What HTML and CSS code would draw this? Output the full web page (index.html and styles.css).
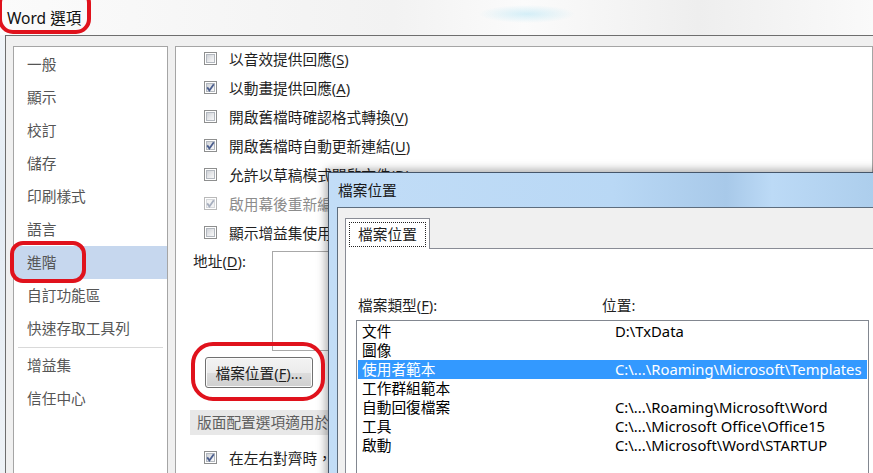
FILE: index.html
```html
<!DOCTYPE html>
<html lang="zh-Hant">
<head>
<meta charset="utf-8">
<title>Word 選項</title>
<link rel="stylesheet" href="styles.css">
</head>
<body>
<div class="screen">
  <header class="titlebar"><span class="title">Word 選項</span></header>
  <div class="client">
    <nav class="sidebar">
      <div class="nav-item">一般</div>
      <div class="nav-item">顯示</div>
      <div class="nav-item">校訂</div>
      <div class="nav-item">儲存</div>
      <div class="nav-item">印刷樣式</div>
      <div class="nav-item">語言</div>
      <div class="nav-item selected">進階</div>
      <div class="nav-item">自訂功能區</div>
      <div class="nav-item">快速存取工具列</div>
      <div class="nav-sep"></div>
      <div class="nav-item">增益集</div>
      <div class="nav-item">信任中心</div>
    </nav>
    <main class="panel">
      <div class="opts">
        <div class="opt"><span class="cb"></span><span>以音效提供回應(<u>S</u>)</span></div>
        <div class="opt"><span class="cb"><svg viewBox="0 0 13 13"><path d="M3.2 6.4 5.4 9.4 9.8 3.2"/></svg></span><span>以動畫提供回應(<u>A</u>)</span></div>
        <div class="opt"><span class="cb"></span><span>開啟舊檔時確認格式轉換(<u>V</u>)</span></div>
        <div class="opt"><span class="cb"><svg viewBox="0 0 13 13"><path d="M3.2 6.4 5.4 9.4 9.8 3.2"/></svg></span><span>開啟舊檔時自動更新連結(<u>U</u>)</span></div>
        <div class="opt"><span class="cb"></span><span>允許以草稿模式開啟文件(<u>D</u>)</span></div>
        <div class="opt disabled"><span class="cb"><svg viewBox="0 0 13 13"><path d="M3.2 6.4 5.4 9.4 9.8 3.2"/></svg></span><span>啟用幕後重新編頁(<u>B</u>)</span></div>
        <div class="opt"><span class="cb"></span><span>顯示增益集使用者介面錯誤(<u>U</u>)</span></div>
      </div>
      <div class="addr-row">
        <span class="addr-label">地址(<u>D</u>):</span>
        <div class="addr-box"></div>
      </div>
      <div class="btn-row"><button class="btn" type="button">檔案位置(<u>F</u>)...</button></div>
      <div class="section-head">版面配置選項適用於(<u>L</u>):</div>
      <div class="opt last"><span class="cb"><svg viewBox="0 0 13 13"><path d="M3.2 6.4 5.4 9.4 9.8 3.2"/></svg></span><span>在左右對齊時，不要擴充字元間距</span></div>
    </main>
  </div>

  <section class="dialog">
    <div class="dlg-title">檔案位置</div>
    <div class="dlg-client">
      <div class="tab"><span class="tab-focus">檔案位置</span></div>
      <div class="tabpanel">
        <div class="type-row"><span class="col1">檔案類型(<u>F</u>):</span><span>位置:</span></div>
        <div class="list">
          <div class="row"><span>文件</span><span class="path">D:\TxData</span></div>
          <div class="row"><span>圖像</span><span class="path"></span></div>
          <div class="row sel"><span>使用者範本</span><span class="path">C:\...\Roaming\Microsoft\Templates</span></div>
          <div class="row"><span>工作群組範本</span><span class="path"></span></div>
          <div class="row"><span>自動回復檔案</span><span class="path">C:\...\Roaming\Microsoft\Word</span></div>
          <div class="row"><span>工具</span><span class="path">C:\...\Microsoft Office\Office15</span></div>
          <div class="row"><span>啟動</span><span class="path">C:\...\Microsoft\Word\STARTUP</span></div>
        </div>
      </div>
    </div>
  </section>

  <div class="mark mark-title"></div>
  <div class="mark mark-nav"></div>
  <div class="mark mark-btn"></div>
</div>
</body>
</html>
```
FILE: styles.css
```css
body {
  margin: 0;
  overflow: hidden;
  font-family: "Noto Sans", "Noto Sans CJK TC", sans-serif;
  font-size: 14.7px;
  color: #1f1f1f;
}

u { text-underline-offset: 2px; }

.screen {
  position: relative;
  width: 873px;
  height: 473px;
  overflow: hidden;
  background: linear-gradient(180deg, #f4f7fa, #e3ebf3 40%, #eef2f6);
}

/* main window title */
.titlebar {
  height: 35px;
  display: flex;
  align-items: center;
  padding-left: 7px;
  font-size: 15.5px;
  line-height: 20px;
  color: #111;
  background:
    radial-gradient(ellipse 48px 9px at 527px 14px, rgba(140, 215, 240, .35), transparent),
    linear-gradient(90deg, #fbfbfb 0%, #f2f2f2 45%, #fbfbfb 60%, #eeeeee 80%, #fafafa 100%);
}

.client {
  margin-left: 5px;
  height: 460px;
  box-sizing: border-box;
  border-top: 1px solid #6e6e6e;
  border-left: 1px solid #6e6e6e;
  background: #f0f0f0;
  display: flex;
  gap: 7px;
  padding: 10px 0 0 7px;
}

/* left navigation */
.sidebar {
  width: 155px;
  flex: none;
  box-sizing: border-box;
  border: 1px solid #a5a5a5;
  background: #fff;
  padding-top: 1px;
  color: #555;
}
.nav-item {
  height: 33px;
  line-height: 33px;
  padding-left: 13px;
}
.nav-item.selected { background: #c6d7ee; }
.nav-sep {
  margin: 2px 4px 1px;
  border-top: 1px solid #d9d9d9;
}

/* right panel */
.panel {
  flex: 1;
  min-width: 0;
  border: 1px solid #a5a5a5;
  background: #fff;
  overflow: hidden;
}
.opts { margin-top: -3px; }
.opt {
  display: flex;
  align-items: center;
  height: 29px;
  padding-left: 28px;
  gap: 12px;
  white-space: nowrap;
  line-height: 20px;
}
.opt.disabled { color: #8c8c8c; }
.opt.last { margin-top: 8px; }

.cb {
  position: relative;
  flex: none;
  width: 13px;
  height: 13px;
  box-sizing: border-box;
  border: 1px solid #8e8f8f;
  background: #fff;
}
.cb::before {
  content: "";
  position: absolute;
  inset: 1px;
  border: 1px solid #b3b8bf;
  background: linear-gradient(135deg, #cfd2d7 0%, #e8e9eb 55%, #f8f8f8 100%);
}
.cb svg {
  position: absolute;
  inset: -1px;
  width: 13px;
  height: 13px;
}
.cb path {
  fill: none;
  stroke: #4b5e8e;
  stroke-width: 1.8;
}
.disabled .cb { border-color: #b9b9b9; }
.disabled .cb::before { border-color: #d6d8db; background: #f3f3f3; }
.disabled .cb path { stroke: #a6aebe; }

.addr-row {
  display: flex;
  margin-top: 4px;
  padding-left: 17px;
}
.addr-label {
  width: 79px;
  flex: none;
  line-height: 21px;
}
.addr-box {
  width: 220px;
  height: 100px;
  flex: none;
  box-sizing: border-box;
  border: 1px solid #a8a8a8;
}

.btn-row {
  margin-top: 6px;
  padding-left: 29px;
}
.btn {
  width: 108px;
  height: 31px;
  padding: 0;
  border: 1px solid #707070;
  border-radius: 3px;
  background: linear-gradient(#f3f3f3, #ebebeb 50%, #dddddd 50%, #cfcfcf);
  box-shadow: inset 0 0 0 1px #fbfbfb;
  font: inherit;
  color: #1f1f1f;
  line-height: 20px;
}

.section-head {
  margin: 22px 0 0 14px;
  height: 25px;
  line-height: 25px;
  padding-left: 7px;
  background: #e8e8e8;
  color: #5f5f5f;
  white-space: nowrap;
}

/* File locations dialog */
.dialog {
  position: absolute;
  left: 328px;
  top: 172px;
  width: 570px;
  height: 320px;
  box-sizing: border-box;
  border: 1px solid #46566a;
  background: linear-gradient(90deg, #c2ddf7 0%, #b9d8f5 50%, #a8c9e9 70%, #bcdaf6 78%, #a9cbea 100%);
  box-shadow: 0 0 9px 2px rgba(0, 0, 0, .35);
  display: flex;
  flex-direction: column;
}
.dlg-title {
  flex: none;
  height: 34px;
  line-height: 34px;
  padding-left: 9px;
  color: #1a1a1a;
}
.dlg-client {
  flex: 1;
  margin-left: 8px;
  border-top: 1px solid #5d6d7e;
  border-left: 1px solid #5d6d7e;
  background: #f0f0f0;
  padding: 10px 0 0 7px;
  display: flex;
  flex-direction: column;
}
.tab {
  position: relative;
  z-index: 1;
  width: 85px;
  height: 31px;
  box-sizing: border-box;
  border: 1px solid #898c95;
  border-bottom: none;
  background: #fff;
  margin-bottom: -1px;
  padding: 3px 0 0 3px;
}
.tab-focus {
  display: block;
  width: 77px;
  height: 25px;
  box-sizing: border-box;
  border: 1px dotted #222;
  text-align: center;
  line-height: 23px;
  color: #1f1f1f;
}
.tabpanel {
  flex: 1;
  border: 1px solid #898c95;
  background: #fff;
  padding-top: 46px;
}
.type-row {
  display: flex;
  line-height: 20px;
  padding-left: 12px;
  color: #1f1f1f;
}
.col1 { width: 244px; flex: none; }

.list {
  margin: 5px 0 0 10px;
  width: 513px;
  height: 200px;
  box-sizing: border-box;
  border: 1px solid #828790;
  padding: 1px;
  color: #000;
}
.row {
  display: grid;
  grid-template-columns: 253px 1fr;
  height: 19px;
  line-height: 19px;
  padding-left: 4px;
  white-space: nowrap;
}
.row.sel { background: #3399ff; color: #fff; }
.path { font-size: 14.8px; }

/* red annotation outlines */
.mark {
  position: absolute;
  box-sizing: border-box;
  border: 4px solid #e0121c;
}
.mark-title { left: -2px; top: -12px; width: 93px; height: 46px; border-radius: 15px; }
.mark-nav { left: 10px; top: 241px; width: 76px; height: 42px; border-radius: 13px; }
.mark-btn { left: 191px; top: 342px; width: 134px; height: 59px; border-radius: 22px; }
```
